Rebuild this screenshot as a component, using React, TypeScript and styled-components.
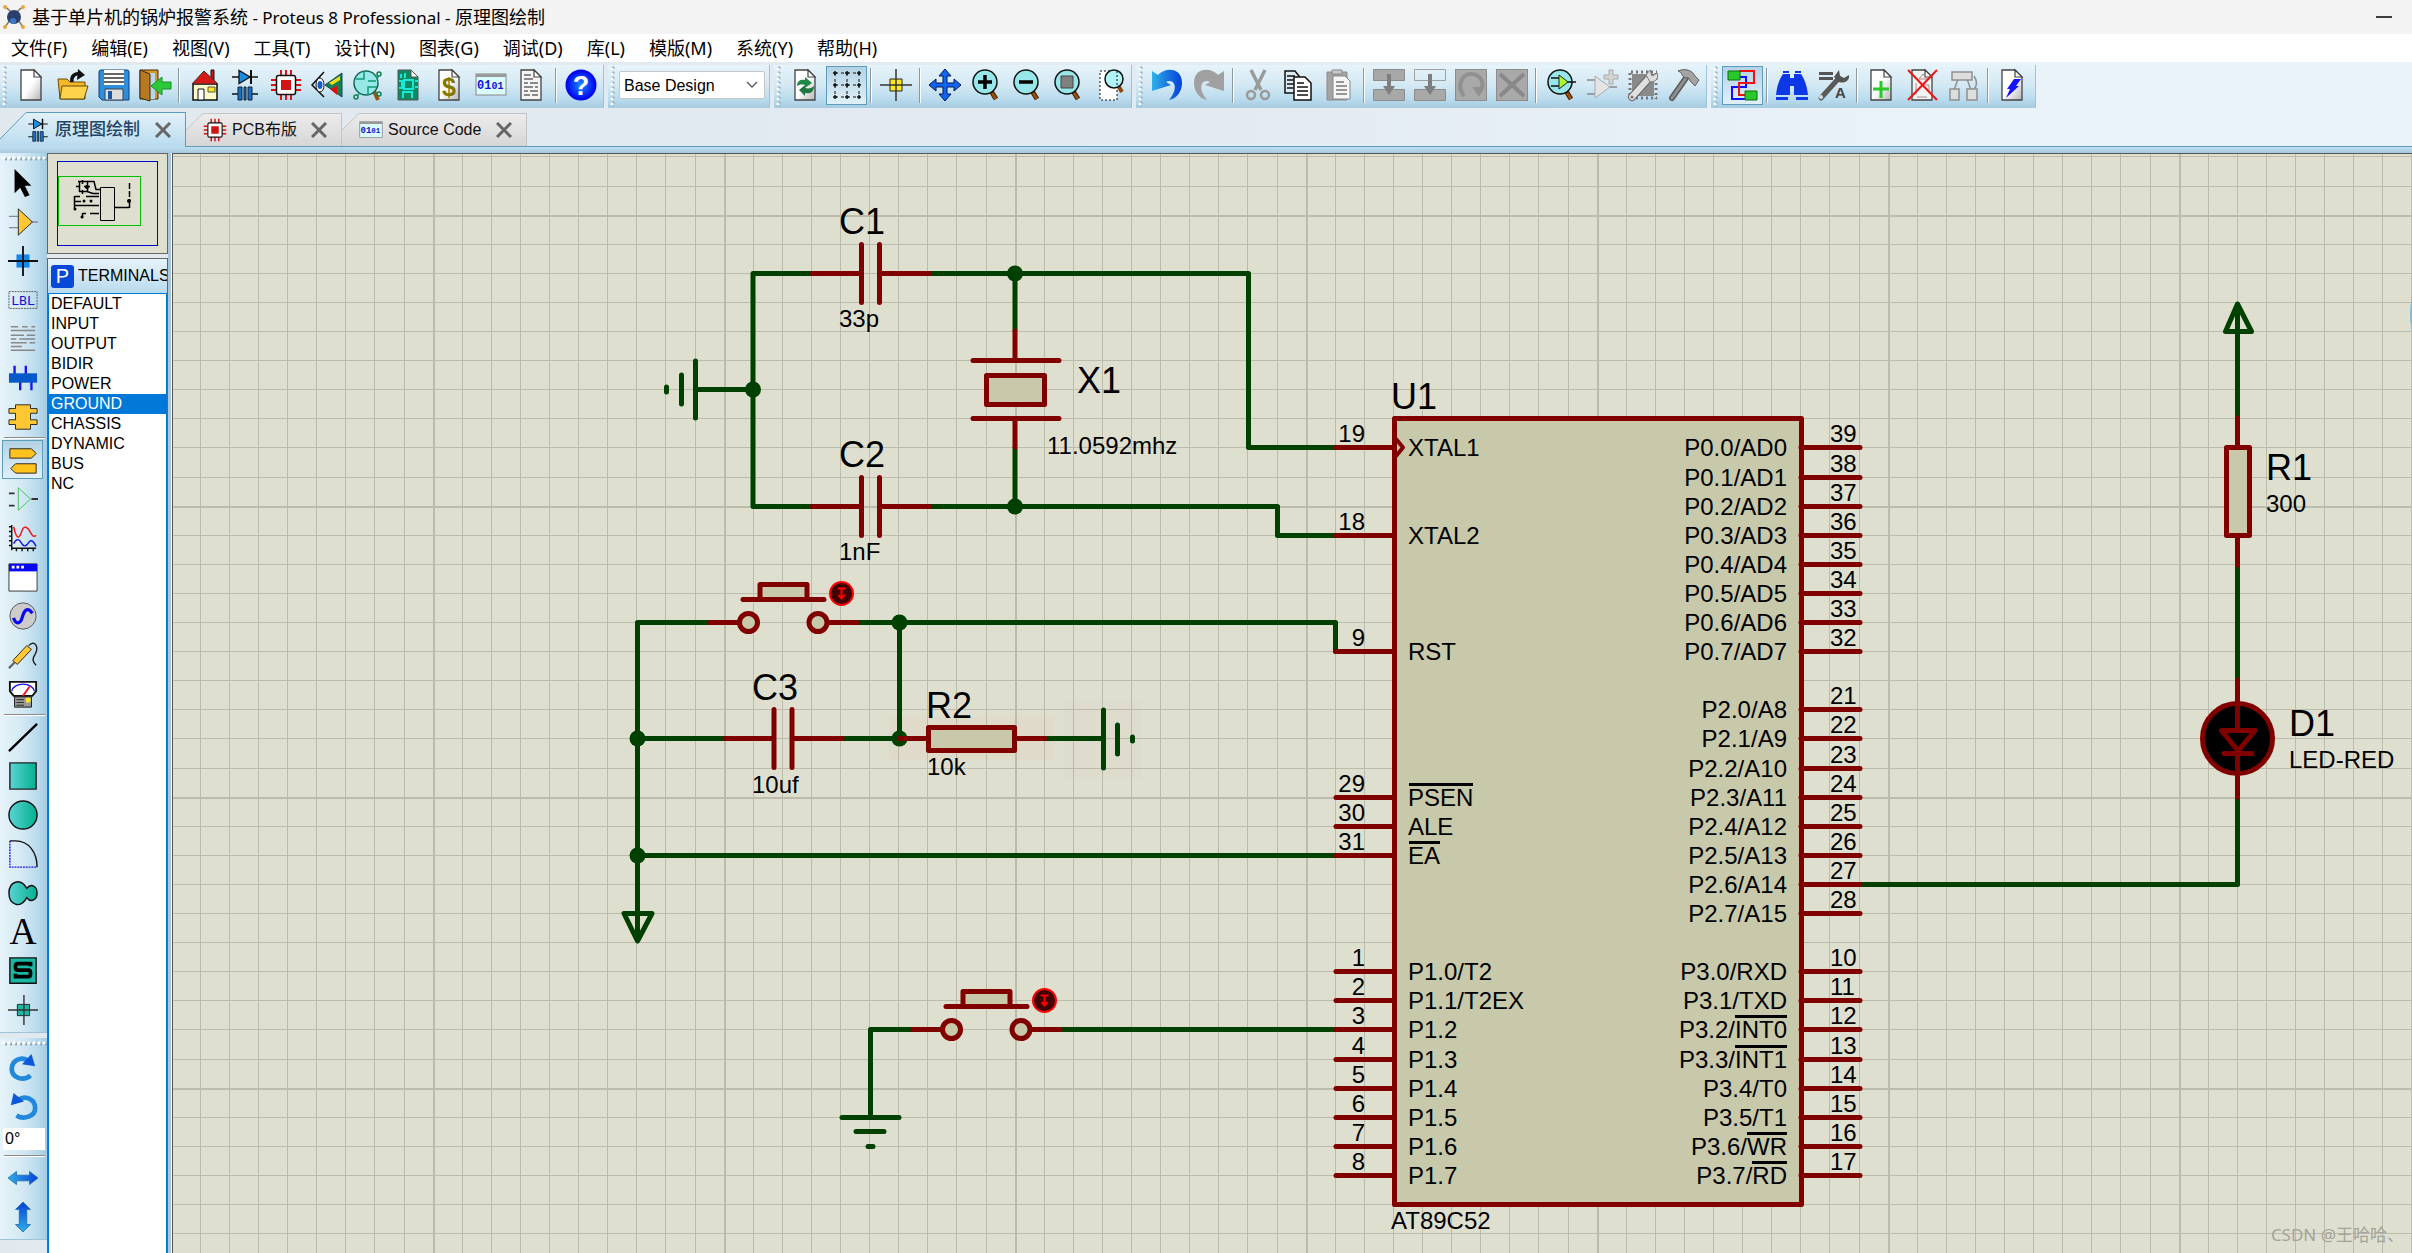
import React, { ReactNode } from 'react';
import styled, { createGlobalStyle, css } from 'styled-components';

const WIRE = '#004000';
const PART = '#800000';
const FILL = '#c8c8aa';
const PAPER = '#dfdfcf';
const GRID = '#bcbcac';
const UI = '"Noto Sans", "Noto Sans CJK SC", sans-serif';
const ARIAL = '"Liberation Sans", "Noto Sans CJK SC", sans-serif';

const Global = createGlobalStyle`
  *, *::before, *::after { box-sizing: border-box; }
  html, body { margin: 0; padding: 0; }
  button, input, select { font: inherit; color: inherit; margin: 0; }
  svg { display: block; }
`;

const Shell = styled.div`
  display: flex;
  flex-direction: column;
  height: 100vh;
  overflow: hidden;
  background: linear-gradient(90deg, #e1e9ef 0%, #e3eaf2 50%, #eaf2fa 82%);
  color: #000;
  font-family: ${ARIAL};
  font-size: 16px;
`;

const TitleBar = styled.header`
  display: flex;
  align-items: center;
  flex: none;
  gap: 6px;
  height: 34px;
  padding: 0 4px 0 2px;
  background: #f3f3f3;
  font-family: ${UI};
`;

const Title = styled.h1`
  flex: 1;
  margin: 0;
  font-size: 18px;
  font-weight: 400;
  line-height: 24px;
  white-space: pre;
`;

const Latin = styled.span`
  font-size: 17px;
`;

const WindowButton = styled.button`
  display: grid;
  place-items: center;
  width: 48px;
  height: 32px;
  padding: 0;
  border: 0;
  background: none;
`;

const MenuBar = styled.nav`
  display: flex;
  flex: none;
  gap: 24px;
  height: 28px;
  padding: 0 11px;
  background: #fff;
  font-family: ${UI};
`;

const MenuButton = styled.button`
  padding: 0;
  border: 0;
  background: none;
  font-size: 18px;
  line-height: 28px;
  white-space: nowrap;
`;

const ToolRow = styled.div`
  display: flex;
  flex: none;
  gap: 4px;
  height: 49px;
  padding-top: 3px;
`;

const ToolGroup = styled.div`
  display: flex;
  align-items: center;
  flex: none;
  height: 43px;
  padding: 0 2px 3px 0;
  border-right: 1px solid #9cc3d8;
  background: linear-gradient(180deg, #e6f3fa 0%, #d5e9f4 45%, #b9dbee 80%, #a8cadf 100%);
`;

const Grip = styled.span`
  flex: none;
  align-self: stretch;
  width: 11px;
  margin-bottom: -2px;
  background: radial-gradient(circle at 4px 4px, #fff 1px, transparent 2px) 0 0 / 11px 5px repeat-y,
    radial-gradient(circle at 5px 3px, #8fa9b8 1px, transparent 2px) 0 0 / 11px 5px repeat-y;
`;

const pressedLook = css`
  border-color: #5e9cbd;
  background: linear-gradient(180deg, #b4d3e4, #e0f0f8);
`;

const ToolButton = styled.button<{ $pressed?: boolean }>`
  display: grid;
  place-items: center;
  flex: none;
  width: 41px;
  height: 39px;
  padding: 0;
  border: 1px solid transparent;
  background: none;
  ${(p) => p.$pressed && pressedLook}
`;

const Divider = styled.span`
  flex: none;
  width: 2px;
  height: 35px;
  margin: 0 3px;
  border-left: 1px solid #8b98a0;
  background: #fff;
`;

const VariantField = styled.label`
  position: relative;
  display: block;
  width: 146px;
  margin-right: 2px;
`;

const VariantSelect = styled.select`
  appearance: none;
  width: 100%;
  height: 28px;
  padding: 0 28px 0 4px;
  border: 1px solid #c6c6c6;
  border-radius: 2px;
  background: #fff;
`;

const Chevron = styled.svg`
  position: absolute;
  top: 9px;
  right: 7px;
  pointer-events: none;
`;

const TabRow = styled.div`
  display: flex;
  align-items: flex-end;
  flex: none;
  height: 36px;
  border-bottom: 1px solid #5e9cbd;
`;

const Tab = styled.div<{ $active?: boolean; $width: number }>`
  display: flex;
  flex: none;
  width: ${(p) => p.$width}px;
  height: ${(p) => (p.$active ? 35 : 33)}px;
  margin-bottom: ${(p) => (p.$active ? -1 : 0)}px;
`;

const TabFace = styled.div<{ $active?: boolean }>`
  display: flex;
  flex: 1;
  align-items: center;
  border: solid ${(p) => (p.$active ? '#5e9cbd' : '#c4c4c4')};
  border-width: 1px 1px 0 0;
  background: ${(p) => (p.$active ? 'linear-gradient(180deg, #e2f1f9, #b9dbee)' : 'linear-gradient(180deg, #ececec, #d6d6d6)')};
`;

const TabButton = styled.button<{ $active?: boolean }>`
  display: flex;
  flex: 1;
  align-items: center;
  gap: 5px;
  padding: 0;
  border: 0;
  background: none;
  color: ${(p) => (p.$active ? '#1f4466' : '#111')};
  font-size: ${(p) => (p.$active ? 17 : 16)}px;
  font-weight: ${(p) => (p.$active ? 500 : 400)};
  line-height: 24px;
  white-space: nowrap;
`;

const CloseButton = styled.button`
  display: grid;
  place-items: center;
  width: 16px;
  height: 24px;
  margin-right: 14px;
  padding: 0;
  border: 0;
  background: none;
`;

const Band = styled.div`
  flex: none;
  height: 6px;
  background: linear-gradient(180deg, #bedff0, #a9cade);
`;

const Workspace = styled.main`
  display: flex;
  flex: 1;
  min-height: 0;
`;

const ModeBar = styled.div`
  display: flex;
  flex: none;
  flex-direction: column;
  gap: 5px;
  width: 47px;
`;

const ModeGroup = styled.div`
  display: flex;
  flex-direction: column;
  align-items: flex-start;
  padding: 0 0 3px 2px;
  border-bottom: 1px solid #9cc3d8;
  background: linear-gradient(90deg, #e6f3fa 0%, #d5e9f4 45%, #b9dbee 80%, #a8cadf 100%);
`;

const ModeGrip = styled.span`
  align-self: stretch;
  height: 10px;
  background: radial-gradient(circle at 2px 5px, #fff 1px, transparent 2px) 0 0 / 5px 10px repeat-x,
    radial-gradient(circle at 4px 6px, #8fa9b8 1px, transparent 2px) 0 0 / 5px 10px repeat-x;
`;

const ModeDivider = styled.span`
  width: 41px;
  height: 2px;
  margin: 1px 2px;
  border-top: 1px solid #8b8b8b;
  background: #fff;
`;

const AngleInput = styled.input`
  width: 42px;
  height: 22px;
  margin: 2px 1px 4px;
  padding: 0 2px;
  border: 0;
  background: #fff;
  font-size: 16px;
`;

const SidePanel = styled.aside`
  display: flex;
  flex: none;
  flex-direction: column;
  gap: 4px;
  width: 121px;
`;

const Preview = styled.div`
  height: 101px;
  border: 1px solid #666;
  background: ${PAPER};
`;

const Picker = styled.section`
  display: flex;
  flex: 1;
  flex-direction: column;
  min-height: 0;
  border: 1px solid #666;
  border-bottom: 0;
`;

const PickerHead = styled.div`
  display: flex;
  align-items: center;
  gap: 4px;
  height: 34px;
  padding-left: 3px;
  overflow: hidden;
  background: linear-gradient(180deg, #e6f3fa, #b9dbee);
`;

const PickButton = styled.button`
  flex: none;
  width: 23px;
  height: 23px;
  padding: 0;
  border: 0;
  border-radius: 3px;
  background: #0848d8;
  color: #fff;
  font-size: 20px;
  line-height: 23px;
`;

const PickerTitle = styled.h2`
  margin: 0;
  font-size: 16px;
  font-weight: 400;
  line-height: 24px;
`;

const PickerList = styled.ul`
  flex: 1;
  margin: 0;
  padding: 0;
  border: solid #0078d7;
  border-width: 1px 1px 0;
  background: #fff;
  list-style: none;
`;

const PickerItem = styled.button<{ $selected?: boolean }>`
  display: block;
  width: 100%;
  padding: 0 2px;
  border: 0;
  background: ${(p) => (p.$selected ? '#0078d7' : 'transparent')};
  color: ${(p) => (p.$selected ? '#fff' : '#000')};
  font-size: 16px;
  line-height: 20px;
  text-align: left;
`;

const Splitter = styled.div`
  flex: none;
  width: 4px;
  border-right: 1px solid #fff;
  background: #a9c8de;
`;

const CanvasPane = styled.section`
  position: relative;
  flex: 1;
  min-width: 0;
  overflow: hidden;
  border: solid #555;
  border-width: 1px 0 0 1px;
  background: ${PAPER};
`;

const Sheet = styled.svg`
  width: 100%;
  height: 100%;
  font-family: ${ARIAL};
  font-size: 24px;
`;

const Watermark = styled.span`
  position: absolute;
  right: 8px;
  bottom: 6px;
  color: #a3a39b;
  font-family: ${UI};
  font-size: 17px;
  line-height: 24px;
`;

const EdgeHandle = styled.span`
  position: absolute;
  top: 92px;
  right: -134px;
  width: 136px;
  height: 136px;
  border-radius: 50%;
  background: #78bce0;
`;

/* ---------- toolbar icons ---------- */

const page = 'M5 1h13l7 7v23H5z';
const fold = 'M18 1v7h7z';

const Page = ({ children, flat }: { children?: ReactNode; flat?: boolean }) => (
  <g>
    <path d={page} fill={flat ? '#f4f4f4' : 'url(#paperShade)'} stroke="#444" strokeWidth="1.3" />
    <path d={fold} fill="#fff" stroke="#444" strokeWidth="1.2" />
    {children}
  </g>
);

const Lens = ({ children, r = 12 }: { children?: ReactNode; r?: number }) => (
  <g transform="translate(2 0)">
    <path d="M19 22l5 8" stroke="#4a2505" strokeWidth="5" />
    <path d="M20 24l4 6" stroke="#9a5210" strokeWidth="2.5" />
    <circle cx="13" cy="13" r={r} fill="#96e6ea" stroke="#111" strokeWidth="1.5" />
    {children}
  </g>
);

const Block = ({ children }: { children?: ReactNode }) => (
  <g>
    <rect x=".5" y=".5" width="31" height="31" fill="#a9a9a9" stroke="#8c8c8c" />
    {children}
  </g>
);

const chip = (
  <g>
    <path d="M11 1v30M16 1v30M21 1v30M1 11h30M1 16h30M1 21h30" stroke="#dc1414" strokeWidth="2" />
    <rect x="6.500" y="6.500" width="19" height="19" rx="2" fill="#fff" stroke="#111" strokeWidth="1.500" />
    <rect x="11" y="11" width="10" height="10" fill="#d01414" />
  </g>
);

const diodeCap = (
  <g>
    <path d="M3 8h26M3 25h7M22 25h7" stroke="#111" strokeWidth="1.5" />
    <path d="M10 1.500v13L21 8z" fill="#1c8ee0" stroke="#111" strokeWidth="1.300" />
    <path d="M22 1v14" stroke="#111" strokeWidth="2" />
    <path d="M9 18h4v13H9zM15 18h2v13h-2zM19 18h4v13h-4z" fill="#1c70c8" stroke="#123" />
  </g>
);

const binary = (
  <g>
    <rect x="1" y="5" width="30" height="21" fill="#d8fbfd" stroke="#888" />
    <path d="M1 5h30v3H1z" fill="#999" />
    <text x="2" y="20" fontFamily="Liberation Mono, monospace" fontWeight="700" fontSize="12" fill="#1212d8">
      01
      <tspan fontSize="10">01</tspan>
    </text>
  </g>
);

const curve = 'M0 2l6 4C13-2 30-2 30 14c0 9-6 16-13 17 5-6 7-12 5-16-1-3-5-4-8-2l5 3-19 6z';

const icons: Record<string, ReactNode> = {
  new: <Page />,
  open: (
    <g>
      <path d="M1 10h9l3 3h15v17H3z" fill="#f5b828" stroke="#6a4a08" />
      <path d="M5 17h26l-4 13H3z" fill="#ffd24c" stroke="#6a4a08" />
      <path d="M15 13c-1-6 3-9 8-8" fill="none" stroke="#111" strokeWidth="3.500" />
      <path d="M21 0l7 6-8 5z" fill="#111" />
    </g>
  ),
  save: (
    <g>
      <path d="M1 3q0-2 2-2h26q2 0 2 2v28H4l-3-3z" fill="#2d8fdc" stroke="#123c78" />
      <path d="M6 1h20v15H6z" fill="#fff" />
      <path d="M6 5h20M6 9h20M6 13h20" stroke="#333" strokeWidth="1.500" />
      <path d="M7 20h18v11H7z" fill="#ddd" stroke="#345" />
      <path d="M10 22h4v8h-4z" fill="#1858a8" />
    </g>
  ),
  exit: (
    <g>
      <path d="M1 1h18v29H1z" fill="#d89428" stroke="#442a08" />
      <path d="M5 4h11v26H5z" fill="#b4d8e8" />
      <path d="M1 1l10 4v27L1 29z" fill="#b87820" stroke="#442a08" />
      <path d="M32 13v7h-9v6l-11-9 11-9v5z" fill="#2cc838" stroke="#189028" />
    </g>
  ),
  home: (
    <g>
      <path d="M23 1h3v10h-3z" fill="#d01818" stroke="#111" />
      <path d="M5 15h24v16H5z" fill="#fffbc8" stroke="#111" strokeWidth="1.500" />
      <path d="M16 2L4 15h26z" fill="#d81818" stroke="#333" />
      <path d="M10 20h6v11h-6z" fill="#fff" stroke="#111" />
      <path d="M20 18h7v5h-7z" fill="#ffe818" stroke="#555" />
    </g>
  ),
  schematic: diodeCap,
  chip,
  view3d: (
    <g>
      <path d="M13 3L1 16l12 12" fill="none" stroke="#111" strokeWidth="1.500" />
      <ellipse cx="9" cy="16" rx="4" ry="7" fill="#fff" stroke="#111" />
      <ellipse cx="9" cy="16" rx="2.500" ry="4" fill="#1858c8" />
      <path d="M14 16L31 4v24z" fill="#188050" stroke="#145" />
      <path d="M18 14l11-7v4l-8 5z" fill="#f0e010" />
      <path d="M19 20l7-3v9z" fill="#e01010" />
    </g>
  ),
  gerber: (
    <g>
      <path d="M22 22l4 9" stroke="#9a5210" strokeWidth="4" />
      <circle cx="14" cy="14" r="12" fill="#98e8e8" stroke="#156858" strokeWidth="1.500" />
      <path d="M4 10h8v-8M16 26v-8h9M24 8h3M8 24l-3 3M16 12h8" fill="none" stroke="#159878" strokeWidth="1.500" />
      <circle cx="27" cy="5" r="2" fill="none" stroke="#108050" strokeWidth="1.500" />
      <circle cx="4" cy="28" r="2" fill="none" stroke="#108050" strokeWidth="1.500" />
      <circle cx="27" cy="25" r="2" fill="none" stroke="#108050" strokeWidth="1.500" />
    </g>
  ),
  explorer: (
    <g>
      <path d={page} fill="#108860" stroke="#555" />
      <path d={fold} fill="#fff" stroke="#555" />
      <path d="M11 11h9v9h-9zM6 12h3v7H6M22 12h3M22 18h3M12 4v5M10 29v-6h9v6M8 5v4" fill="none" stroke="#18e8d8" strokeWidth="2" />
    </g>
  ),
  bom: (
    <Page>
      <text x="15" y="27" textAnchor="middle" fontFamily="Liberation Sans, sans-serif" fontWeight="700" fontSize="25" fill="#807800">
        $
      </text>
    </Page>
  ),
  binary,
  notes: (
    <Page flat>
      <path d="M8 6h7M8 10h9M8 14h4M14 14h8M8 18h9M19 18h3M8 22h4M14 22h8M8 26h6M16 26h6" stroke="#666" strokeWidth="1.500" />
    </Page>
  ),
  help: (
    <g>
      <circle cx="16" cy="16" r="15.500" fill="url(#helpShade)" />
      <text x="16" y="26" textAnchor="middle" fontFamily="Liberation Sans, sans-serif" fontWeight="700" fontSize="27" fill="#fff">
        ?
      </text>
    </g>
  ),
  refresh: (
    <Page>
      <path d="M7 17c0-6 5-7 8-6V8l7 6-7 5v-3c-4-1-6 0-8 1z" fill="#208848" />
      <path d="M24 17c0 7-5 8-9 7v3l-6-6 6-5v3c4 1 7 0 9-2z" fill="#207840" />
    </Page>
  ),
  grid: (
    <g fill="none" stroke="#111">
      <path d="M4 4h24M4 16h24M4 28h24M4 4v24M16 4v24M28 4v24" strokeWidth="1" strokeDasharray="3 3" />
      <path
        d="M2 4h4M14 4h4M26 4h4M2 16h4M14 16h4M26 16h4M2 28h4M14 28h4M26 28h4M4 2v4M4 14v4M4 26v4M16 2v4M16 14v4M16 26v4M28 2v4M28 14v4M28 26v4"
        strokeWidth="1.500"
      />
    </g>
  ),
  origin: (
    <g>
      <path d="M10 10h12v12H10z" fill="#ffe818" stroke="#222" />
      <path d="M16 0v32M0 16h32" stroke="#333" strokeWidth="1.500" />
    </g>
  ),
  pan: (
    <path
      d="M16 0l6 7h-4v7h7v-4l7 6-7 6v-4h-7v7h4l-6 7-6-7h4v-7H7v4l-7-6 7-6v4h7V7h-4z"
      fill="#1064f0"
      stroke="#061850"
    />
  ),
  zoomIn: (
    <Lens>
      <path d="M6 13h14M13 6v14" stroke="#000" strokeWidth="3.500" />
    </Lens>
  ),
  zoomOut: (
    <Lens>
      <path d="M6 13h14" stroke="#000" strokeWidth="3.500" />
    </Lens>
  ),
  zoomAll: (
    <Lens>
      <path d="M7 7h12v12H7z" fill="#808080" stroke="#444" />
    </Lens>
  ),
  zoomArea: (
    <g transform="translate(5 0)">
      <path d="M2 2h17v29H2z" fill="#fff" stroke="#111" strokeDasharray="2 2" />
      <path d="M21 18l3 5" stroke="#8a4a10" strokeWidth="4" />
      <circle cx="16" cy="10" r="9" fill="#b0f4f8" stroke="#111" strokeWidth="1.500" />
      <path d="M19 2v17" stroke="#111" strokeDasharray="2 2" />
    </g>
  ),
  undo: <path d={curve} fill="url(#blueShade)" />,
  redo: <path d={curve} fill="#a0a0a0" transform="translate(31 0) scale(-1 1)" />,
  cut: (
    <g fill="none" stroke="#9a9a9a">
      <path d="M9 1l10 20M23 1L13 21" strokeWidth="3.500" />
      <circle cx="9" cy="26" r="4" strokeWidth="2.500" />
      <circle cx="23" cy="26" r="4" strokeWidth="2.500" />
    </g>
  ),
  copy: (
    <g stroke="#111" strokeWidth="1.500">
      <path d="M2 2h10l4 5v17H2z" fill="#dceaf4" />
      <path d="M4 7h8M4 11h8M4 15h8M4 19h6" />
      <path d="M11 8h11l6 6v17H11z" fill="#fff" />
      <path d="M14 14h7M14 18h11M14 22h11M14 26h11" />
    </g>
  ),
  paste: (
    <g>
      <path d="M3 3h20v28H3z" fill="#a4a4a4" stroke="#8a8a8a" />
      <path d="M8 1h10v4H8z" fill="#c8c8c8" stroke="#888" />
      <path d="M9 7h12l5 5v18H9z" fill="#f6f6f6" stroke="#888" />
      <path d="M12 13h8M12 17h11M12 21h11M12 25h11" stroke="#777" strokeWidth="1.500" />
    </g>
  ),
  blockCopy: (
    <g>
      <path d="M.5.5h31v11H.5zM.5 20.500h31v11H.5z" fill="#a8a8a8" stroke="#8c8c8c" />
      <path d="M14 5h4v12h4l-6 9-6-9h4z" fill="#7e7e7e" />
    </g>
  ),
  blockMove: (
    <g>
      <path d="M.5.5h31v11H.5z" fill="none" stroke="#a0a0a0" />
      <path d="M.5 20.500h31v11H.5z" fill="#a8a8a8" stroke="#8c8c8c" />
      <path d="M14 5h4v12h4l-6 9-6-9h4z" fill="#7e7e7e" />
    </g>
  ),
  blockRotate: (
    <Block>
      <path d="M9 27c-8-10-2-22 7-22s15 9 9 18" fill="none" stroke="#909090" strokeWidth="4" />
      <path d="M17 18h12l-5 10z" fill="#909090" />
    </Block>
  ),
  blockDelete: (
    <Block>
      <path d="M4 5l24 22M28 5L4 27" stroke="#888" strokeWidth="4" />
    </Block>
  ),
  pick: (
    <Lens>
      <path d="M4 9h9M4 17h9M20 13h9" stroke="#111" strokeWidth="1.500" />
      <path d="M12 6v14l9-7z" fill="#a8f838" stroke="#222" />
    </Lens>
  ),
  makeDevice: (
    <g>
      <path d="M1 11h8M1 25h8M22 18h9" stroke="#888" strokeWidth="1.500" />
      <path d="M9 7v22l15-11z" fill="#e4e4e4" stroke="#aaa" />
      <path d="M23 1h4v5h5v4h-5v5h-4v-5h-5V6h5z" fill="#d4d4d4" stroke="#aaa" />
    </g>
  ),
  packaging: (
    <g>
      <path d="M5 5h22v22H5z" fill="#8a8a8a" />
      <path d="M4 3h26M4 29h26M3 4v26M29 4v26" stroke="#777" strokeWidth="3" strokeDasharray="2 3" />
      <path d="M5 28L23 8" stroke="#666" strokeWidth="8" strokeLinecap="round" />
      <path d="M5 28L23 8" stroke="#e0e0e0" strokeWidth="6" strokeLinecap="round" />
      <path d="M19 6l4-5 2 6 5-3c2 5-1 9-7 9z" fill="#ddd" stroke="#777" />
      <circle cx="5" cy="28" r="1.500" fill="#777" />
    </g>
  ),
  decompose: (
    <g>
      <path d="M4 29L18 9" stroke="#5c5c5c" strokeWidth="6" strokeLinecap="round" />
      <path d="M4 29L18 9" stroke="#8f8f8f" strokeWidth="3" strokeLinecap="round" />
      <path d="M10 2c7-3 14-1 17 5l4 4-4 6-5-5c0-3-2-4-5-3l-3-3c0-2-2-3-4-4z" fill="#a4a4a4" stroke="#606060" />
    </g>
  ),
  autoroute: (
    <g fill="none" strokeWidth="2">
      <path d="M12 8h7v10H5v12h14" stroke="#1010ff" />
      <path d="M12 2h15v12H12v12h7" stroke="#f01010" />
      <path d="M1 2h12v9H1zM18 22h12v9H18z" fill="#28c828" stroke="#146814" strokeWidth="1" />
    </g>
  ),
  search: (
    <g fill="#0c38e8">
      <path d="M7 5h7v21H0C1 17 3 11 7 5zM18 5h7c4 6 6 12 7 21H18z" />
      <path d="M14 9h4v8h-4zM7 2h6v2H7zM19 2h6v2h-6zM0 28h12v3H0zM20 28h12v3H20z" />
    </g>
  ),
  properties: (
    <g>
      <path d="M2 3h14v3H2zM2 8h14v3H2z" fill="#555" />
      <path d="M4 29L22 9" stroke="#5a5a5a" strokeWidth="5" strokeLinecap="round" />
      <path d="M17 8l5-7 1 6 4 2 5-3c1 6-5 9-10 7z" fill="#555" />
      <circle cx="4" cy="28" r="2" fill="#ddd" />
      <text x="18" y="29" fontFamily="Liberation Sans, sans-serif" fontWeight="700" fontSize="15" fill="#444">
        A
      </text>
    </g>
  ),
  addSheet: (
    <Page>
      <path d="M15 12v17M7 20h16" stroke="#28c828" strokeWidth="3" />
    </Page>
  ),
  removeSheet: (
    <g>
      <Page flat>
        <path d="M12 10l4-5 4 5zM9 14v12M14 16h8v8M10 28h10" fill="none" stroke="#a88" />
      </Page>
      <path d="M1 1l29 30M30 1L1 31" stroke="#f01414" strokeWidth="2" />
    </g>
  ),
  hierarchy: (
    <g fill="#dedede" stroke="#909090" strokeWidth="1.500">
      <path d="M10 10L6 21M19 10l4 11M26 7q5 8 0 13" fill="none" />
      <path d="M4 3h20v8H4zM2 20h9v11H2zM19 20h10v11H19z" />
    </g>
  ),
  erc: (
    <Page>
      <path d="M17 10h7l-5 7h3L9 29l4-9h-3z" fill="#1414ff" />
    </Page>
  ),
  select: <path d="M7 1v26l6-6 5 10 5-2-5-10h7z" fill="#000" />,
  component: (
    <g>
      <path d="M1 10h10M1 22h10M25 16h7" stroke="#889" strokeWidth="1.500" />
      <path d="M11 2v28l15-14z" fill="#ffc832" stroke="#222" />
    </g>
  ),
  junction: (
    <g>
      <path d="M9 9h14v14H9z" fill="#1488e8" />
      <path d="M16 0v32M0 16h32" stroke="#111" strokeWidth="2" />
    </g>
  ),
  label: (
    <g>
      <path d="M1 7h30v18H1z" fill="none" stroke="#555" strokeDasharray="2 1" />
      <text x="16" y="21" textAnchor="middle" fontFamily="DejaVu Sans Mono, monospace" fontSize="14" fill="#1414d8">
        LBL
      </text>
    </g>
  ),
  script: (
    <path d="M3 3h8M15 3h6M25 3h4M3 7h26M3 12h14M20 12h9M3 16h6M12 16h17M3 20h17M23 20h6M3 24h12M3 28h26" stroke="#888" strokeWidth="1.500" />
  ),
  bus: (
    <g>
      <path d="M7 3v11M19 3v11M13 18v11M25 18v11" stroke="#1414ff" strokeWidth="2.500" />
      <path d="M1 11h30v10H1z" fill="#0858c8" />
    </g>
  ),
  subcircuit: (
    <path d="M8 3h16v4h7v5h-7v7h7v5h-7v5H8v-5H1v-5h7v-7H1V7h7z" fill="#ffc832" stroke="#222" />
  ),
  terminal: (
    <g fill="#ffc21e" stroke="#222">
      <path d="M2 4h23l5 5-5 5H2zM30 20H8l-5 5 5 5h22z" />
    </g>
  ),
  pin: (
    <g fill="none">
      <path d="M1 10h6M1 23h6M25 16h7" stroke="#333" strokeWidth="2" />
      <path d="M11 4v24l13-12z" stroke="#48c060" />
    </g>
  ),
  graph: (
    <g fill="none" strokeWidth="1.500">
      <path d="M4 2v27M4 27h26M1 4h3M1 9h3M1 14h3M1 19h3M1 24h3M9 27v3M15 27v3M21 27v3M27 27v3" stroke="#111" />
      <path d="M6 4c4 18 7 10 9 4s6-4 9 2 5 4 6 3" stroke="#f01414" />
      <path d="M6 22c3-6 6-5 8-1s5 5 8 0 6 0 8 4" stroke="#1414f0" />
    </g>
  ),
  tape: (
    <g>
      <path d="M1 2h30v29H1z" fill="#fff" stroke="#333" />
      <path d="M1 2h30v8H1z" fill="#0808f8" />
      <path d="M4 4h3v3H4zM9 4h3v3H9zM14 4h3v3h-3z" fill="#fff" />
    </g>
  ),
  generator: (
    <g>
      <circle cx="16" cy="16" r="14" fill="#ccc" stroke="#555" />
      <path d="M6 18c2 7 7 7 9 0s5-13 11-5" fill="none" stroke="#0808f8" strokeWidth="3.500" />
    </g>
  ),
  probe: (
    <g fill="none" stroke="#222">
      <path d="M1 30l6-6" stroke="#666" strokeWidth="2.500" />
      <path d="M5 22L20 6l5 4L10 26z" fill="#ffc832" />
      <path d="M22 6c7-7 11 2 7 9-4 6-2 9 1 12" strokeWidth="1.500" />
    </g>
  ),
  meter: (
    <g>
      <path d="M2 3h28v10l-4 5H6l-4-5z" fill="#fff" stroke="#111" strokeWidth="2" />
      <path d="M4 13C6 3 26 3 28 13" fill="none" stroke="#1414f0" strokeWidth="1.500" />
      <path d="M16 18l7-10" stroke="#f01414" strokeWidth="2" />
      <path d="M7 19h18v11H7z" fill="#999" stroke="#111" />
      <path d="M19 20h5v5h-5z" fill="#ffe818" />
      <path d="M9 22h8M9 25h8M9 28h8" stroke="#222" />
    </g>
  ),
  line: <path d="M1 31L31 2" stroke="#000" strokeWidth="2.500" />,
  box: <path d="M2 2h28v28H2z" fill="url(#tealShade)" stroke="#222" strokeWidth="1.500" />,
  circle: <circle cx="16" cy="16" r="15" fill="url(#tealShade)" stroke="#111" strokeWidth="1.500" />,
  arc: (
    <g fill="none">
      <path d="M2 2v28h29" stroke="#1414f0" strokeDasharray="2 1" strokeWidth="1.500" />
      <path d="M2 2h6c14 0 23 12 23 28" stroke="#111" strokeWidth="1.500" />
    </g>
  ),
  path: (
    <path d="M20 11c5-6 11-2 11 5s-6 11-11 5C13 34 1 28 1 16S13-1 20 11z" fill="url(#tealShade)" stroke="#111" strokeWidth="1.500" />
  ),
  text: (
    <text x="16" y="29" textAnchor="middle" fontFamily="Liberation Serif, serif" fontSize="40" fill="#000">
      A
    </text>
  ),
  symbol: (
    <g>
      <path d="M2 2h28v27H2z" fill="#1ab8a4" stroke="#111" strokeWidth="1.500" />
      <path d="M24 11V8H10q-2 0-2 3v1q0 3 2 3h12q2 0 2 3v1q0 3-2 3H8v-3" fill="none" stroke="#000" strokeWidth="4" />
    </g>
  ),
  marker: (
    <g>
      <path d="M10 10h13v12H10z" fill="#1ab8a4" stroke="#222" />
      <path d="M17 0v32M0 16h32" stroke="#333" strokeWidth="1.500" />
    </g>
  ),
  rotateCw: (
    <g>
      <path d="M24 24C16 31 4 26 4 17 4 8 14 3 21 8" fill="none" stroke="#2288dc" strokeWidth="5" />
      <path d="M25 1l4 13-14-2z" fill="#0c58d8" />
    </g>
  ),
  rotateCcw: (
    <g>
      <path d="M9 25c8 5 20 1 20-8C29 8 19 3 12 8" fill="none" stroke="#2288dc" strokeWidth="5" />
      <path d="M6 1L3 14l14-4z" fill="#0c58d8" />
    </g>
  ),
  mirrorX: <path d="M0 16l9-7v4h14V9l9 7-9 7v-4H9v4z" fill="url(#blueShade)" stroke="#1868a8" strokeWidth=".8" />,
  mirrorY: <path d="M16 0l8 8h-4v16h4l-8 8-8-8h4V8H8z" fill="url(#riseShade)" stroke="#1868a8" strokeWidth=".8" />,
};

const Icon = ({ name, size = 32 }: { name: string; size?: number }) => (
  <svg width={size} height={size} viewBox="0 0 32 32" overflow="visible" aria-hidden="true">
    {icons[name]}
  </svg>
);

const ShadeDefs = styled.svg`
  position: absolute;
`;

const Shades = () => (
  <ShadeDefs width="0" height="0" aria-hidden="true">
    <defs>
      <linearGradient id="paperShade" x1="0" y1="0" x2="1" y2="1">
        <stop offset=".5" stopColor="#fff" />
        <stop offset="1" stopColor="#b4b4b4" />
      </linearGradient>
      <radialGradient id="helpShade">
        <stop offset="0" stopColor="#1890ff" />
        <stop offset=".9" stopColor="#0408f0" />
      </radialGradient>
      <linearGradient id="blueShade">
        <stop offset="0" stopColor="#30b0e8" />
        <stop offset="1" stopColor="#0440d8" />
      </linearGradient>
      <linearGradient id="riseShade" x1="0" y1="1" x2="0" y2="0">
        <stop offset="0" stopColor="#30b0e8" />
        <stop offset="1" stopColor="#0440d8" />
      </linearGradient>
      <linearGradient id="tealShade">
        <stop offset="0" stopColor="#5ad4d4" />
        <stop offset="1" stopColor="#04b090" />
      </linearGradient>
    </defs>
  </ShadeDefs>
);

/* ---------- toolbars ---------- */

const Tools = ({ names, pressed }: { names: string[]; pressed?: string }) => (
  <ToolGroup role="toolbar">
    <Grip />
    {names.map((n, i) =>
      n === '|' ? (
        <Divider key={i} />
      ) : (
        <ToolButton key={i} type="button" aria-label={n} aria-pressed={n === pressed} $pressed={n === pressed}>
          <Icon name={n} />
        </ToolButton>
      ),
    )}
  </ToolGroup>
);

const fileTools = 'new open save exit | home schematic chip view3d gerber explorer bom binary notes | help'.split(' ');
const viewTools = 'refresh grid | origin | pan zoomIn zoomOut zoomAll zoomArea'.split(' ');
const editTools =
  'undo redo | cut copy paste | blockCopy blockMove blockRotate blockDelete | pick makeDevice packaging decompose'.split(' ');
const designTools = 'autoroute | search properties | addSheet removeSheet hierarchy | erc'.split(' ');
const modeTools =
  'select component junction label script bus subcircuit | terminal pin graph tape generator probe meter | line box circle arc path text symbol marker'.split(
    ' ',
  );
const menus = ['文件(F)', '编辑(E)', '视图(V)', '工具(T)', '设计(N)', '图表(G)', '调试(D)', '库(L)', '模版(M)', '系统(Y)', '帮助(H)'];
const terminals = ['DEFAULT', 'INPUT', 'OUTPUT', 'BIDIR', 'POWER', 'GROUND', 'CHASSIS', 'DYNAMIC', 'BUS', 'NC'];

const Mode = ({ name, pressed }: { name: string; pressed?: boolean }) =>
  name === '|' ? (
    <ModeDivider />
  ) : (
    <ToolButton type="button" aria-label={name} $pressed={pressed}>
      <Icon name={name} size={30} />
    </ToolButton>
  );

const DocTab = ({ icon, label, width, active }: { icon: string; label: string; width: number; active?: boolean }) => {
  const slant = active ? 26 : 17;
  const h = active ? 35 : 33;
  return (
    <Tab $active={active} $width={width}>
      <svg width={slant} height={h} aria-hidden="true">
        <defs>
          <linearGradient id={`slant-${icon}`} x1="0" y1="0" x2="0" y2="1">
            <stop offset="0" stopColor={active ? '#e2f1f9' : '#ececec'} />
            <stop offset="1" stopColor={active ? '#b9dbee' : '#d6d6d6'} />
          </linearGradient>
        </defs>
        <path d={`M0 ${active ? 27 : 17}L${slant} 0V${h}H0z`} fill={`url(#slant-${icon})`} />
        <path d={`M0 ${active ? 27 : 17}L${slant} .5`} stroke={active ? '#5e9cbd' : '#c4c4c4'} fill="none" />
      </svg>
      <TabFace $active={active}>
        <TabButton type="button" role="tab" aria-selected={!!active} $active={active}>
          <Icon name={icon} size={24} />
          {label}
        </TabButton>
        <CloseButton type="button" aria-label={`close ${label}`}>
          <svg width="16" height="16" aria-hidden="true">
            <path d="M1 1l14 14M15 1L1 15" stroke="#666" strokeWidth="3" />
          </svg>
        </CloseButton>
      </TabFace>
    </Tab>
  );
};

/* ---------- schematic ---------- */

const PITCH = 29.1;

const GridLines = () => (
  <g stroke={GRID} shapeRendering="crispEdges">
    {Array.from({ length: 150 }, (_, i) => {
      const n = i - 30;
      const x = Math.round(1014.6 + n * PITCH);
      return <line key={`x${n}`} x1={x + 0.5} x2={x + 0.5} y1="0" y2="3000" strokeWidth={n % 10 === 0 ? 2 : 1} />;
    })}
    {Array.from({ length: 100 }, (_, i) => {
      const n = i - 3;
      const y = Math.round(214.6 + n * PITCH);
      return <line key={`y${n}`} y1={y + 0.5} y2={y + 0.5} x1="0" x2="4500" strokeWidth={n % 10 === 0 ? 2 : 1} />;
    })}
  </g>
);

type Pin = [row: number, num: string, name: string, bar?: [number, number]];

const leftPins: Pin[] = [
  [0, '19', 'XTAL1'],
  [3, '18', 'XTAL2'],
  [7, '9', 'RST'],
  [12, '29', 'PSEN', [1409, 1473]],
  [13, '30', 'ALE'],
  [14, '31', 'EA', [1409, 1440]],
  ...['P1.0/T2', 'P1.1/T2EX', 'P1.2', 'P1.3', 'P1.4', 'P1.5', 'P1.6', 'P1.7'].map(
    (name, i): Pin => [18 + i, String(i + 1), name],
  ),
];

const rightPins: Pin[] = [
  ...Array.from({ length: 8 }, (_, i): Pin => [i, String(39 - i), `P0.${i}/AD${i}`]),
  ...Array.from({ length: 8 }, (_, i): Pin => [9 + i, String(21 + i), `P2.${i}/A${8 + i}`]),
  [18, '10', 'P3.0/RXD'],
  [19, '11', 'P3.1/TXD'],
  [20, '12', 'P3.2/INT0', [1735, 1787]],
  [21, '13', 'P3.3/INT1', [1735, 1787]],
  [22, '14', 'P3.4/T0'],
  [23, '15', 'P3.5/T1'],
  [24, '16', 'P3.6/WR', [1747, 1787]],
  [25, '17', 'P3.7/RD', [1752, 1787]],
];

const pinY = (row: number) => Math.round(447.4 + row * PITCH) + 0.5;

const PinMark = ({ pin, side }: { pin: Pin; side: 'left' | 'right' }) => {
  const [row, num, name, bar] = pin;
  const y = pinY(row);
  const left = side === 'left';
  return (
    <g>
      <path d={left ? `M1336 ${y}H1394` : `M1801 ${y}H1860`} stroke={PART} strokeWidth="5" strokeLinecap="round" />
      <text x={left ? 1365 : 1830} y={y - 5.5} textAnchor={left ? 'end' : 'start'}>
        {num}
      </text>
      <text x={left ? 1408 : 1787} y={y + 8.5} textAnchor={left ? 'start' : 'end'}>
        {name}
      </text>
      {bar && <path d={`M${bar[0]} ${y - 13}H${bar[1]}`} stroke="#000" strokeWidth="3" />}
    </g>
  );
};

const Capacitor = ({ x, y }: { x: number; y: number }) => (
  <path
    d={`M${x - 58} ${y}h49M${x + 9} ${y}h50M${x - 9} ${y - 29}v58M${x + 9} ${y - 29}v58`}
    stroke={PART}
    strokeWidth="5"
    strokeLinecap="round"
  />
);

const PushSwitch = ({ x, y }: { x: number; y: number }) => (
  <g transform={`translate(${x} ${y})`} stroke={PART} strokeWidth="5" strokeLinecap="round" strokeLinejoin="round">
    <path d="M-73 0h29M43 0h31" />
    <circle cx="-34.500" r="9" fill={FILL} />
    <circle cx="35" r="9" fill={FILL} />
    <path d="M-23-23v-15h47v15" fill={FILL} />
    <path d="M-40-23h81" />
    <circle cx="58.500" cy="-29" r="11.500" fill="#400000" stroke="#f00" strokeWidth="2" />
    <path d="M55.500-34h6M58.500-34v8M56-27l2.500 3 2.500-3" stroke="#f00" strokeWidth="2" fill="none" />
  </g>
);

const nodes = [
  [753, 389.5],
  [1015, 273.5],
  [1015, 506.5],
  [899.5, 622.5],
  [899.5, 738.5],
  [637.5, 738.5],
  [637.5, 855.5],
];

const wires = [
  'M812 273.500H753V506.500H812',
  'M753 389.500H695.500',
  'M930 273.500H1248.500V447.500H1336',
  'M930 506.500H1277.500V535.500H1336',
  'M1015 273.500V330M1015 448V506.500',
  'M709 622.500H637.500V938',
  'M857 622.500H1335.500V651.500',
  'M899.500 622.500V738.500H842M724 738.500H637.500',
  'M637.500 855.500H1336',
  'M1045 738.500H1103.500',
  'M912 1029.500H870.500V1117.500M1062 1029.500H1336',
  'M1861 884.500H2237.500V799M2237.500 678V566M2237.500 417V306',
  'M695.500 361V418M681.500 375V404M666.500 387V392',
  'M1103.500 710V768M1117.500 725V754M1132.500 737V741',
  'M842 1117.500H899M856 1131.500H884M868 1146.500H873',
  'M624 913.500H652L637.500 941z',
  'M2225.500 331.500H2251.500L2237.500 304z',
];

const labels: [number, number, string][] = [
  [839, 327, '33p'],
  [839, 560, '1nF'],
  [1047, 454, '11.0592mhz'],
  [752, 793, '10uf'],
  [927, 775, '10k'],
  [1391, 1229, 'AT89C52'],
  [2266, 512, '300'],
  [2289, 768, 'LED-RED'],
];

const refs: [number, number, string][] = [
  [839, 234, 'C1'],
  [839, 467, 'C2'],
  [1077, 393, 'X1'],
  [752, 700, 'C3'],
  [926, 718, 'R2'],
  [1391, 409, 'U1'],
  [2266, 480, 'R1'],
  [2289, 736, 'D1'],
];

const Schematic = () => (
  <Sheet role="img" aria-label="AT89C52 schematic">
    <g transform="translate(-173 -154)">
      <GridLines />
      <rect x="889" y="717" width="165" height="43" fill="#e0a090" opacity=".07" />
      <rect x="1064" y="700" width="78" height="78" fill="#e0a090" opacity=".02" />

      <g fill="none" stroke={WIRE} strokeWidth="5" strokeLinecap="round" strokeLinejoin="round">
        {wires.map((d) => (
          <path key={d} d={d} />
        ))}
      </g>
      <g fill={WIRE}>
        {nodes.map(([x, y]) => (
          <circle key={`${x}-${y}`} cx={x} cy={y} r="8" />
        ))}
      </g>

      <Capacitor x={870.5} y={273.5} />
      <Capacitor x={870.5} y={506.5} />
      <Capacitor x={783} y={738.5} />
      <PushSwitch x={783} y={622.5} />
      <PushSwitch x={986} y={1029.5} />

      <g fill={FILL} stroke={PART} strokeWidth="5" strokeLinecap="round" strokeLinejoin="round">
        <path d="M1015 331V360.500M973 360.500H1059M1015 447V418.500M973 418.500H1059" />
        <rect x="986.500" y="375.500" width="58" height="29" />
        <path d="M899.500 738.500H928M1015 738.500H1045" />
        <rect x="928.500" y="727.500" width="86" height="23" />
        <path d="M2237.500 418V447M2237.500 536V565" />
        <rect x="2226.500" y="447.500" width="23" height="88" />
        <circle cx="2237.500" cy="738.500" r="35" fill="#000" />
        <path d="M2237.500 680V730M2237.500 754V797M2221.500 730.500H2255L2238 751zM2224 753.500H2252" fill="none" />
        <rect x="1394.500" y="418.500" width="407" height="786" />
        <path d="M1396 439L1403 447.500L1396 456" fill="none" strokeWidth="4" />
      </g>

      {leftPins.map((p) => (
        <PinMark key={p[1]} pin={p} side="left" />
      ))}
      {rightPins.map((p) => (
        <PinMark key={p[1]} pin={p} side="right" />
      ))}
      {labels.map(([x, y, t]) => (
        <text key={t} x={x} y={y}>
          {t}
        </text>
      ))}
      <g fontSize="36">
        {refs.map(([x, y, t]) => (
          <text key={t} x={x} y={y}>
            {t}
          </text>
        ))}
      </g>
    </g>
  </Sheet>
);

const Overview = () => (
  <svg width="119" height="99" aria-hidden="true" fill="none">
    <rect x="9.500" y="7.500" width="100" height="84" stroke="#0000c8" />
    <rect x="10.500" y="22.500" width="82" height="49" stroke="#00c000" />
    <g stroke="#000">
      <path d="M52.500 33.500h14v33h-14z" />
      <path
        d="M30 27.500h16l2 8h4M31.500 28v10M31 37.500h8l6 2h6M28 32.500h3M34.500 26v4M39.500 28v9M34.500 36v4M36 32.500h6M27 42.500h5M38 42.500h13M26.500 42v12M27 47.500h6M27 51.500h24M34 59.500h4M42 59.500h9M34.500 59v5M67 53.500h14M81.500 54v-8"
        strokeWidth="1.500"
      />
      <path d="M81.500 29v19" strokeDasharray="6 2" strokeWidth="1.500" />
    </g>
    <g fill="#000">
      <circle cx="81" cy="47" r="2" />
      <circle cx="27" cy="55" r="1.500" />
      <circle cx="43" cy="47" r="1.500" />
      <circle cx="36" cy="47" r="1.500" />
      <circle cx="34" cy="63" r="1.500" />
      <circle cx="39" cy="33" r="2" />
    </g>
  </svg>
);

const Logo = () => (
  <svg width="24" height="26" viewBox="0 0 24 26" aria-hidden="true">
    <path d="M3 3c5 3 13 12 18 20M21 3C15 6 8 16 3 23" fill="none" stroke="#8a7a66" strokeWidth="1.500" />
    <circle cx="12" cy="13" r="7" fill="#2a3f6a" />
    <circle cx="11" cy="17" r="3" fill="#3c78c8" />
    <g fill="#e8a838">
      <circle cx="3" cy="3" r="2" />
      <circle cx="21" cy="3" r="2" />
      <circle cx="3" cy="23" r="2" />
      <circle cx="21" cy="23" r="2" />
    </g>
  </svg>
);

export default function App() {
  return (
    <Shell>
      <Global />
      <Shades />
      <TitleBar>
        <Logo />
        <Title>
          基于单片机的锅炉报警系统<Latin> - Proteus 8 Professional - </Latin>原理图绘制
        </Title>
        <WindowButton type="button" aria-label="minimise">
          <svg width="16" height="2" aria-hidden="true">
            <path d="M0 1h16" stroke="#000" strokeWidth="1.500" />
          </svg>
        </WindowButton>
      </TitleBar>
      <MenuBar>
        {menus.map((m) => (
          <MenuButton key={m} type="button">
            {m}
          </MenuButton>
        ))}
      </MenuBar>
      <ToolRow>
        <Tools names={fileTools} />
        <ToolGroup>
          <Grip />
          <VariantField>
            <VariantSelect aria-label="Design variant" defaultValue="Base Design">
              <option>Base Design</option>
            </VariantSelect>
            <Chevron width="12" height="10" aria-hidden="true">
              <path d="M1 2l5 5 5-5" fill="none" stroke="#555" strokeWidth="1.300" />
            </Chevron>
          </VariantField>
        </ToolGroup>
        <Tools names={viewTools} pressed="grid" />
        <Tools names={editTools} />
        <Tools names={designTools} pressed="autoroute" />
      </ToolRow>
      <TabRow role="tablist">
        <DocTab icon="schematic" label="原理图绘制" width={186} active />
        <DocTab icon="chip" label="PCB布版" width={156} />
        <DocTab icon="binary" label="Source Code" width={185} />
      </TabRow>
      <Band />
      <Workspace>
        <ModeBar>
          <ModeGroup role="toolbar">
            <ModeGrip />
            {modeTools.map((n, i) => (
              <Mode key={i} name={n} pressed={n === 'terminal'} />
            ))}
          </ModeGroup>
          <ModeGroup role="toolbar">
            <ModeGrip />
            <Mode name="rotateCw" />
            <Mode name="rotateCcw" />
            <AngleInput aria-label="Rotation angle" defaultValue="0°" />
            <ModeDivider />
            <Mode name="mirrorX" />
            <Mode name="mirrorY" />
          </ModeGroup>
        </ModeBar>
        <SidePanel>
          <Preview>
            <Overview />
          </Preview>
          <Picker>
            <PickerHead>
              <PickButton type="button" aria-label="Pick devices">
                P
              </PickButton>
              <PickerTitle>TERMINALS</PickerTitle>
            </PickerHead>
            <PickerList>
              {terminals.map((t) => (
                <li key={t}>
                  <PickerItem type="button" $selected={t === 'GROUND'}>
                    {t}
                  </PickerItem>
                </li>
              ))}
            </PickerList>
          </Picker>
        </SidePanel>
        <Splitter />
        <CanvasPane>
          <Schematic />
          <EdgeHandle />
          <Watermark>CSDN @王哈哈、</Watermark>
        </CanvasPane>
      </Workspace>
    </Shell>
  );
}
